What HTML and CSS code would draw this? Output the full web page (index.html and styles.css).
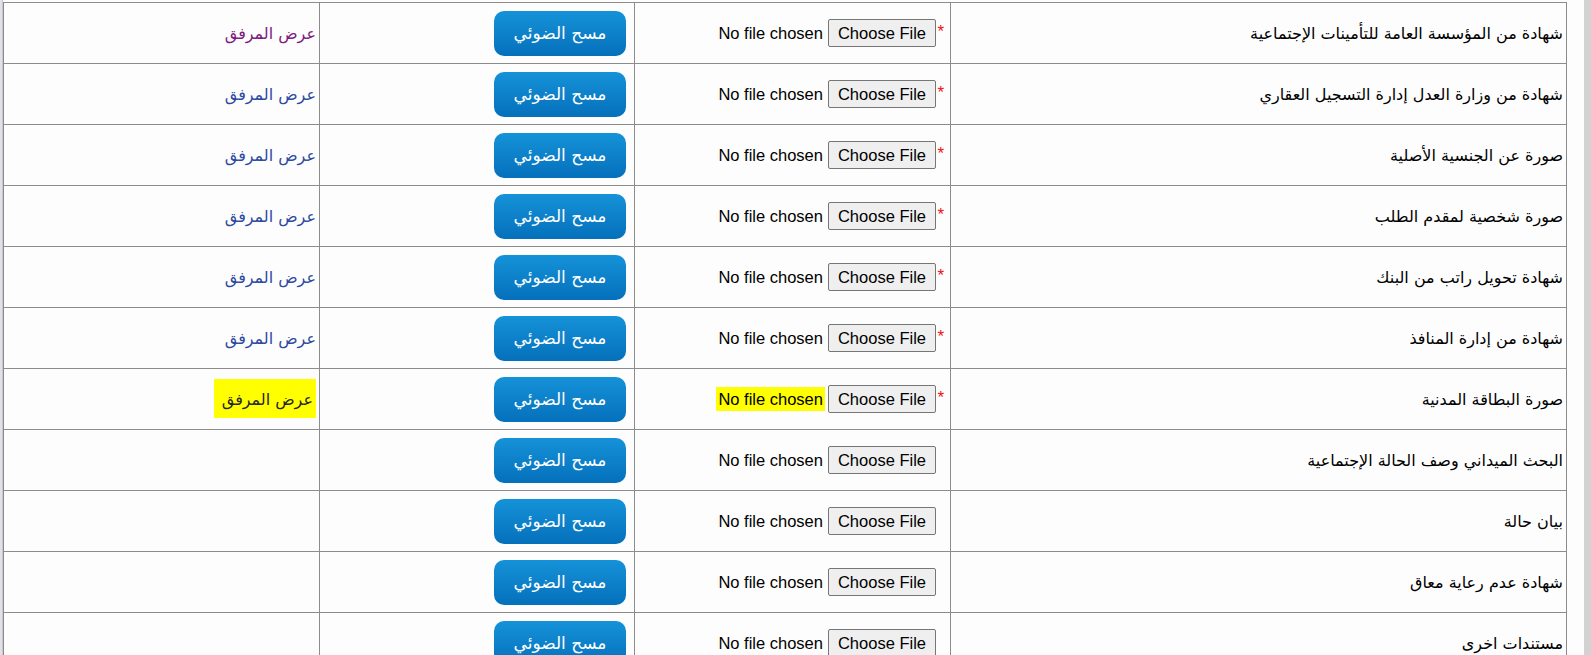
FILE: index.html
```html
<!DOCTYPE html>
<html lang="ar">
<head>
<meta charset="utf-8">
<title>المرفقات</title>
<link rel="stylesheet" href="styles.css">
</head>
<body>
<div class="page">
  <div class="edge"></div>
  <table class="docs" dir="rtl">
    <colgroup>
      <col class="c-label"><col class="c-file"><col class="c-scan"><col class="c-view">
    </colgroup>
    <tbody>
      <tr>
        <td class="label">شهادة من المؤسسة العامة للتأمينات الإجتماعية</td>
        <td class="file"><div class="file-row"><span class="req">*</span><span class="choose">Choose File</span><span class="none">No file chosen</span></div></td>
        <td class="scan"><button class="scan-btn">مسح الضوئي</button></td>
        <td class="view"><a class="link visited" href="#">عرض المرفق</a></td>
      </tr>
      <tr>
        <td class="label">شهادة من وزارة العدل إدارة التسجيل العقاري</td>
        <td class="file"><div class="file-row"><span class="req">*</span><span class="choose">Choose File</span><span class="none">No file chosen</span></div></td>
        <td class="scan"><button class="scan-btn">مسح الضوئي</button></td>
        <td class="view"><a class="link" href="#">عرض المرفق</a></td>
      </tr>
      <tr>
        <td class="label">صورة عن الجنسية الأصلية</td>
        <td class="file"><div class="file-row"><span class="req">*</span><span class="choose">Choose File</span><span class="none">No file chosen</span></div></td>
        <td class="scan"><button class="scan-btn">مسح الضوئي</button></td>
        <td class="view"><a class="link" href="#">عرض المرفق</a></td>
      </tr>
      <tr>
        <td class="label">صورة شخصية لمقدم الطلب</td>
        <td class="file"><div class="file-row"><span class="req">*</span><span class="choose">Choose File</span><span class="none">No file chosen</span></div></td>
        <td class="scan"><button class="scan-btn">مسح الضوئي</button></td>
        <td class="view"><a class="link" href="#">عرض المرفق</a></td>
      </tr>
      <tr>
        <td class="label">شهادة تحويل راتب من البنك</td>
        <td class="file"><div class="file-row"><span class="req">*</span><span class="choose">Choose File</span><span class="none">No file chosen</span></div></td>
        <td class="scan"><button class="scan-btn">مسح الضوئي</button></td>
        <td class="view"><a class="link" href="#">عرض المرفق</a></td>
      </tr>
      <tr>
        <td class="label">شهادة من إدارة المنافذ</td>
        <td class="file"><div class="file-row"><span class="req">*</span><span class="choose">Choose File</span><span class="none">No file chosen</span></div></td>
        <td class="scan"><button class="scan-btn">مسح الضوئي</button></td>
        <td class="view"><a class="link" href="#">عرض المرفق</a></td>
      </tr>
      <tr>
        <td class="label">صورة البطاقة المدنية</td>
        <td class="file"><div class="file-row"><span class="req">*</span><span class="choose">Choose File</span><span class="none mark">No file chosen</span></div></td>
        <td class="scan"><button class="scan-btn">مسح الضوئي</button></td>
        <td class="view"><a class="link marked" href="#">عرض المرفق</a></td>
      </tr>
      <tr>
        <td class="label">البحث الميداني وصف الحالة الإجتماعية</td>
        <td class="file"><div class="file-row"><span class="req off">*</span><span class="choose">Choose File</span><span class="none">No file chosen</span></div></td>
        <td class="scan"><button class="scan-btn">مسح الضوئي</button></td>
        <td class="view"></td>
      </tr>
      <tr>
        <td class="label">بيان حالة</td>
        <td class="file"><div class="file-row"><span class="req off">*</span><span class="choose">Choose File</span><span class="none">No file chosen</span></div></td>
        <td class="scan"><button class="scan-btn">مسح الضوئي</button></td>
        <td class="view"></td>
      </tr>
      <tr>
        <td class="label">شهادة عدم رعاية معاق</td>
        <td class="file"><div class="file-row"><span class="req off">*</span><span class="choose">Choose File</span><span class="none">No file chosen</span></div></td>
        <td class="scan"><button class="scan-btn">مسح الضوئي</button></td>
        <td class="view"></td>
      </tr>
      <tr>
        <td class="label">مستندات اخرى</td>
        <td class="file"><div class="file-row"><span class="req off">*</span><span class="choose">Choose File</span><span class="none">No file chosen</span></div></td>
        <td class="scan"><button class="scan-btn">مسح الضوئي</button></td>
        <td class="view"></td>
      </tr>
    </tbody>
  </table>
  <div class="scrollbar"></div>
</div>
</body>
</html>
```
FILE: styles.css
```css
html, body {
  margin: 0;
  padding: 0;
  background: #fdfdfd;
}
body {
  font-family: "DejaVu Sans", "Liberation Sans", sans-serif;
  font-size: 16px;
  color: #000;
  overflow: hidden;
}
.page {
  display: flex;
  align-items: flex-start;
  height: 655px;
  overflow: hidden;
}
.edge {
  flex: none;
  width: 3px;
  height: 655px;
  background: #e2e0e8;
  border-right: 1px solid #c8c8c8;
  box-sizing: border-box;
}
.docs {
  flex: none;
  margin-top: 2px;
  width: 1563px;
  table-layout: fixed;
  border-collapse: collapse;
}
.c-label { width: 616px; }
.c-file { width: 316px; }
.c-scan { width: 315px; }
.c-view { width: 316px; }
.docs td {
  border: 1px solid #8c8c8c;
  height: 61px;
  padding: 0 3px;
  vertical-align: middle;
  text-align: right;
  box-sizing: border-box;
}
.label {
  font-size: 16px;
}
.file {
  padding-right: 6px !important;
}
.file-row {
  display: flex;
  align-items: center;
  gap: 5px;
  white-space: nowrap;
  font-family: "Liberation Sans", Arial, sans-serif;
  font-size: 16.5px;
}
.req {
  color: #f01010;
  font-size: 17px;
  line-height: 17px;
  width: 6px;
  margin-left: -3px;
  margin-bottom: 3px;
  text-align: center;
}
.req.off {
  visibility: hidden;
}
.choose {
  box-sizing: border-box;
  height: 28px;
  line-height: 26px;
  padding: 0 9px;
  background: #efefef;
  border: 1px solid #767676;
  border-radius: 2px;
  color: #000;
}
.none {
  color: #000;
  line-height: 24px;
}
.mark {
  background: #ffff00;
  padding: 0 2px;
  margin: 0 -2px;
}
.scan {
  padding-right: 8px !important;
}
.scan-btn {
  width: 132px;
  height: 45px;
  border: 0;
  border-radius: 10px;
  background: linear-gradient(to bottom, #1592d8, #0570bb);
  color: #fff;
  font-family: "DejaVu Sans", sans-serif;
  font-size: 17px;
  cursor: pointer;
}
.link {
  text-decoration: none;
  font-size: 16px;
  color: #2c4aa0;
}
.link.visited {
  color: #7d1a80;
}
.link.marked {
  color: #262626;
  background: #ffff00;
  padding: 11px 3px 9px 8px;
}
.scrollbar {
  flex: none;
  margin-left: auto;
  width: 7px;
  height: 655px;
  background: #d2d2d2;
}
```
